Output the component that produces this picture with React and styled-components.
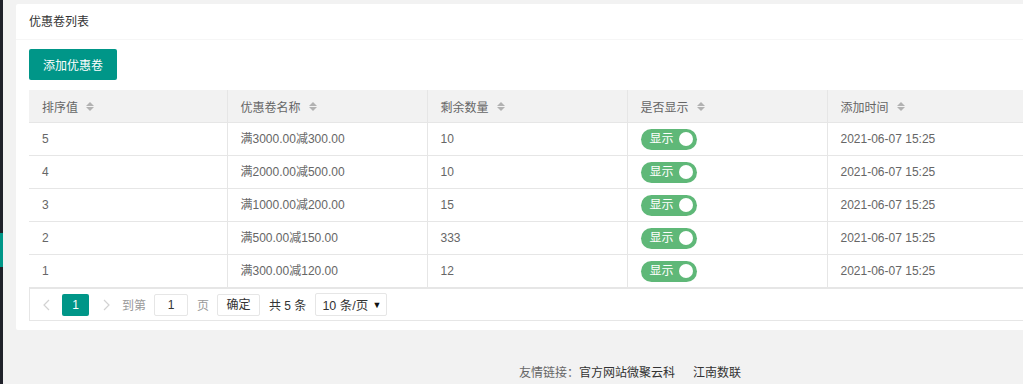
import styled, { createGlobalStyle } from "styled-components";

const GlobalStyle = createGlobalStyle`
  html, body {
    margin: 0;
    padding: 0;
    background: #f2f2f2;
    overflow: hidden;
  }
  body {
    font-family: "Liberation Sans", "Noto Sans CJK SC", sans-serif;
    font-size: 12px;
    color: #666;
  }
`;

const coupons = [
  { id: 5, name: "满3000.00减300.00", left: 10 },
  { id: 4, name: "满2000.00减500.00", left: 10 },
  { id: 3, name: "满1000.00减200.00", left: 15 },
  { id: 2, name: "满500.00减150.00", left: 333 },
  { id: 1, name: "满300.00减120.00", left: 12 },
];

const columns = [
  { title: "排序值", width: 198 },
  { title: "优惠卷名称", width: 200 },
  { title: "剩余数量", width: 200 },
  { title: "是否显示", width: 200 },
  { title: "添加时间", width: 200 },
];

function Chevron({ dir }) {
  return (
    <svg width="7" height="12" viewBox="0 0 7 12">
      <path
        d={dir === "left" ? "M6 1 L1 6 L6 11" : "M1 1 L6 6 L1 11"}
        fill="none"
        stroke="#d2d2d2"
        strokeWidth="1.2"
      />
    </svg>
  );
}

export default function App() {
  return (
    <>
      <GlobalStyle />
      <Layout>
        <SideStrip>
          <SideMark />
        </SideStrip>
        <Main>
          <Card>
            <CardHeader>优惠卷列表</CardHeader>
            <CardBody>
              <AddButton>添加优惠卷</AddButton>
              <Table>
                <colgroup>
                  {columns.map((c) => (
                    <col key={c.title} style={{ width: c.width }} />
                  ))}
                </colgroup>
                <thead>
                  <tr>
                    {columns.map((c) => (
                      <Th key={c.title}>
                        <HeadCell>
                          {c.title}
                          <SortIcon>
                            <Up />
                            <Down />
                          </SortIcon>
                        </HeadCell>
                      </Th>
                    ))}
                  </tr>
                </thead>
                <tbody>
                  {coupons.map((row) => (
                    <tr key={row.id}>
                      <Td>{row.id}</Td>
                      <Td>{row.name}</Td>
                      <Td>{row.left}</Td>
                      <Td>
                        <Switch>
                          显示
                          <Knob />
                        </Switch>
                      </Td>
                      <Td>2021-06-07 15:25</Td>
                    </tr>
                  ))}
                </tbody>
              </Table>
              <Pager>
                <Arrow $ml={13}>
                  <Chevron dir="left" />
                </Arrow>
                <PageCurrent>1</PageCurrent>
                <Arrow $ml={14}>
                  <Chevron dir="right" />
                </Arrow>
                <PagerText $ml={12}>到第</PagerText>
                <PageInput>1</PageInput>
                <PagerText $ml={9}>页</PagerText>
                <ConfirmButton>确定</ConfirmButton>
                <Total>共 5 条</Total>
                <LimitSelect>
                  10 条/页 <Caret>▼</Caret>
                </LimitSelect>
              </Pager>
            </CardBody>
          </Card>
          <Footer>
            <FooterLabel>友情链接：</FooterLabel>
            <FooterLink>官方网站微聚云科</FooterLink>
            <FooterLink>江南数联</FooterLink>
          </Footer>
        </Main>
      </Layout>
    </>
  );
}

const Layout = styled.div`
  display: flex;
  height: 384px;
`;

const SideStrip = styled.div`
  width: 3px;
  flex-shrink: 0;
  background: #20222a;
  padding-top: 233px;
`;

const SideMark = styled.div`
  height: 34px;
  background: #009688;
`;

const Main = styled.div`
  padding: 4px 0 0 13px;
  flex-shrink: 0;
`;

const Card = styled.div`
  width: 1040px;
  background: #fff;
  border-radius: 2px;
`;

const CardHeader = styled.div`
  height: 33px;
  padding-top: 2px;
  line-height: 33px;
  padding-left: 13px;
  border-bottom: 1px solid #f6f6f6;
  color: #333;
  font-size: 12px;
`;

const CardBody = styled.div`
  padding: 9px 13px 9px;
`;

const AddButton = styled.button`
  display: block;
  height: 31px;
  padding: 0 14px;
  border: none;
  border-radius: 2px;
  background: #009688;
  color: #fff;
  font-family: inherit;
  font-size: 12px;
  cursor: pointer;
`;

const Table = styled.table`
  margin-top: 10px;
  width: 998px;
  table-layout: fixed;
  border-collapse: collapse;
`;

const Th = styled.th`
  height: 32px;
  padding: 0 13px;
  background: #f2f2f2;
  border: 1px solid #e6e6e6;
  border-top: none;
  text-align: left;
  font-weight: normal;
  color: #666;
  &:first-child {
    border-left: none;
  }
`;

const HeadCell = styled.div`
  display: flex;
  align-items: center;
  gap: 8px;
`;

const SortIcon = styled.span`
  display: inline-flex;
  flex-direction: column;
  gap: 1px;
`;

const Up = styled.i`
  width: 0;
  height: 0;
  border-left: 4px solid transparent;
  border-right: 4px solid transparent;
  border-bottom: 4px solid #b2b2b2;
`;

const Down = styled.i`
  width: 0;
  height: 0;
  border-left: 4px solid transparent;
  border-right: 4px solid transparent;
  border-top: 4px solid #b2b2b2;
`;

const Td = styled.td`
  height: 32px;
  padding: 0 13px;
  border: 1px solid #e6e6e6;
  color: #666;
  line-height: 16px;
  white-space: nowrap;
  &:first-child {
    border-left: none;
  }
`;

const Switch = styled.span`
  display: inline-flex;
  align-items: center;
  justify-content: space-between;
  box-sizing: border-box;
  width: 56px;
  height: 21px;
  padding: 0 4px 0 9px;
  border-radius: 11px;
  background: #5fb878;
  color: #fff;
  font-size: 12px;
`;

const Knob = styled.i`
  width: 14px;
  height: 14px;
  border-radius: 50%;
  background: #fff;
`;

const Pager = styled.div`
  display: flex;
  align-items: center;
  box-sizing: border-box;
  width: 1000px;
  height: 34px;
  margin-top: -1px;
  border: 1px solid #e6e6e6;
  border-top-width: 2px;
`;

const Arrow = styled.span`
  display: inline-flex;
  margin-left: ${(p) => p.$ml}px;
`;

const PageCurrent = styled.span`
  width: 27px;
  height: 22px;
  line-height: 22px;
  margin-left: 12px;
  border-radius: 2px;
  background: #009688;
  color: #fff;
  text-align: center;
`;

const PagerText = styled.span`
  margin-left: ${(p) => p.$ml}px;
  color: #999;
`;

const PageInput = styled.span`
  box-sizing: border-box;
  width: 34px;
  height: 22px;
  line-height: 20px;
  margin-left: 8px;
  border: 1px solid #e6e6e6;
  border-radius: 2px;
  text-align: center;
  color: #333;
`;

const ConfirmButton = styled.span`
  box-sizing: border-box;
  width: 43px;
  height: 22px;
  line-height: 20px;
  margin-left: 8px;
  border: 1px solid #e6e6e6;
  border-radius: 2px;
  background: #fff;
  color: #333;
  text-align: center;
`;

const Total = styled.span`
  margin-left: 9px;
  color: #333;
`;

const LimitSelect = styled.span`
  display: inline-flex;
  align-items: center;
  justify-content: space-between;
  box-sizing: border-box;
  width: 72px;
  height: 23px;
  margin-left: 9px;
  padding: 0 5px 0 6px;
  border: 1px solid #e6e6e6;
  border-radius: 2px;
  color: #333;
  font-size: 12.5px;
`;

const Caret = styled.span`
  font-size: 9px;
  color: #111;
`;

const Footer = styled.div`
  display: flex;
  gap: 18px;
  padding: 33px 0 0 503px;
  color: #333;
  font-size: 12px;
`;

const FooterLabel = styled.span`
  color: #666;
  margin-right: -18px;
`;

const FooterLink = styled.span`
  color: #333;
`;
